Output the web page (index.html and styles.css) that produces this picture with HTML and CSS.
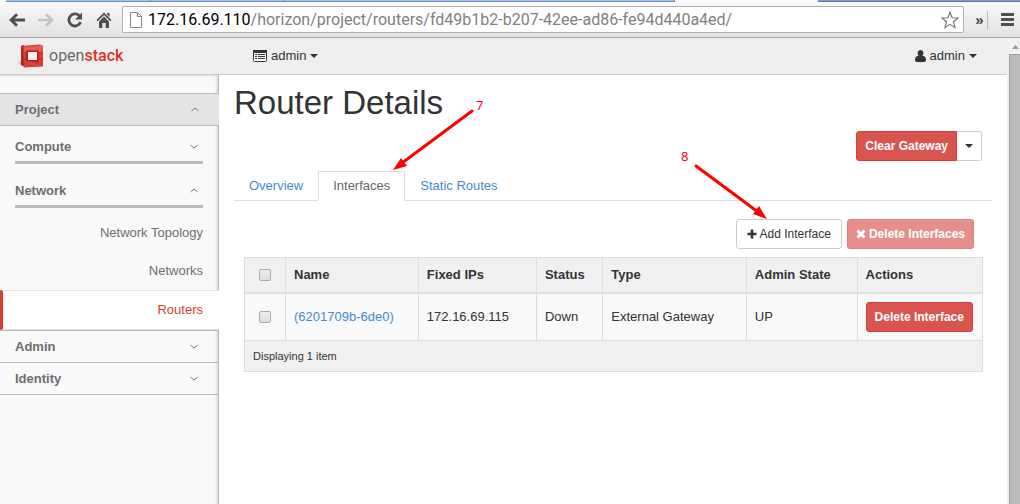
FILE: index.html
```html
<!DOCTYPE html>
<html lang="en">
<head>
<meta charset="utf-8">
<title>Router Details - OpenStack Dashboard</title>
<link rel="stylesheet" href="styles.css">
</head>
<body>
<div class="browser">
  <div class="tabstrip"><span class="tab-bg"></span><span class="tab-bg"></span><span class="tab-bg"></span><span class="tab-active"></span><span class="tab-rest"></span></div>
  <div class="toolbar">
    <div class="nav-buttons">
      <button class="icon-btn" aria-label="Back"><svg width="16" height="14" viewBox="0 0 16 14"><path d="M8 1.200L2 7l6 5.800M2.500 7H16" fill="none" stroke="#505050" stroke-width="2.800"/></svg></button>
      <button class="icon-btn" aria-label="Forward"><svg width="16" height="14" viewBox="0 0 16 14"><path d="M8 1.200L14 7l-6 5.800M13.500 7H0" fill="none" stroke="#c4c4c4" stroke-width="2.600"/></svg></button>
      <button class="icon-btn" aria-label="Reload"><svg width="16" height="16" viewBox="0 0 16 16"><path d="M12.300 3.800A6 6 0 1 0 13.600 10" fill="none" stroke="#505050" stroke-width="2.800"/><path d="M15 .5v7H8z" fill="#505050"/></svg></button>
      <button class="icon-btn" aria-label="Home"><svg width="16" height="16" viewBox="0 0 16 16"><path d="M8 .5L15.500 8l-1.200 1.200L8 3 1.700 9.200.5 8zM11 1h2.500v4L11 2.500zM8 4.500l5 5V16H9.700v-5H6.300v5H3V9.500z" fill="#505050"/></svg></button>
    </div>
    <div class="address">
      <svg width="12" height="16" viewBox="0 0 12 16"><path d="M.5.5h7l4 4v11H.5zM7.500.5v4h4" fill="#fff" stroke="#858585"/></svg>
      <div class="url"><span class="host">172.16.69.110</span>/horizon/project/routers/fd49b1b2-b207-42ee-ad86-fe94d440a4ed/</div>
      <button class="icon-btn" aria-label="Bookmark"><svg width="18" height="18" viewBox="0 0 18 18"><path d="M9 1.200l2.100 5.500 6 .3-4.700 3.700 1.600 5.900L9 13.300l-5 3.300 1.600-5.900L.9 7l6-.3z" fill="#fff" stroke="#707070" stroke-width="1.100"/></svg></button>
    </div>
    <button class="icon-btn more" aria-label="More bookmarks">»</button>
    <span class="divider"></span>
    <button class="icon-btn menu" aria-label="Menu"><svg width="13" height="13" viewBox="0 0 13 13"><path d="M0 1.500h13M0 6.500h13M0 11.500h13" stroke="#505050" stroke-width="3"/></svg></button>
  </div>
</div>

<div class="viewport">
  <div class="page">
    <header class="topbar">
      <a class="brand" href="#">
        <svg width="26" height="24" viewBox="0 0 26 24"><path d="M0 19l4-3v6z" fill="#c4c4c4"/><path d="M3 2l3-1.300L7 23l-4-2z" fill="#a92720"/><path d="M3 2L22 .5l3 1L6 3z" fill="#d2413a"/><path d="M5 2.500L25 1.500v21L6 23.500z" fill="#dc3d32"/><path d="M6 3l19-1.500v6L6 8z" fill="#e85b50"/><path d="M8 6.500h12.500V18L8 17z" fill="#a62620"/><path d="M10 8h9v8h-9z" fill="#f4eeee"/><path d="M3 9h5M3 15h5M21 9h4M21 15h4" stroke="#b52e27"/></svg>
        <span class="brand-name">open<b>stack</b></span>
      </a>
      <button class="top-menu project-menu"><svg width="14" height="12" viewBox="0 0 14 12"><path d="M1.500.5h11a1 1 0 0 1 1 1v9a1 1 0 0 1-1 1h-11a1 1 0 0 1-1-1v-9a1 1 0 0 1 1-1z" fill="#fff" stroke="#333"/><path d="M0 0h14v3H0z" fill="#333"/><path d="M2 4.500h2M5 4.500h7M2 6.500h2M5 6.500h7M2 8.500h2M5 8.500h7" stroke="#333"/></svg>admin<span class="caret"></span></button>
      <button class="top-menu"><svg width="11" height="12" viewBox="0 0 11 12"><path d="M5.500 0a3 3.300 0 0 1 2 5.700C10.300 6 11 8 11 10c0 1.300-.8 2-2 2H2c-1.200 0-2-.7-2-2 0-2 .7-4 3.500-4.300A3 3.300 0 0 1 5.500 0z" fill="#333"/></svg>admin<span class="caret"></span></button>
    </header>
    <div class="body">
      <nav class="sidebar">
        <a class="group open" href="#">Project<svg class="chev" viewBox="0 0 8 5"><path d="M.5 4L4 1l3.500 3"/></svg></a>
        <div class="panel">
          <a class="sub" href="#">Compute<svg class="chev" viewBox="0 0 8 5"><path d="M.5 1L4 4l3.500-3"/></svg></a>
          <a class="sub" href="#">Network<svg class="chev" viewBox="0 0 8 5"><path d="M.5 4L4 1l3.500 3"/></svg></a>
          <a class="item" href="#">Network Topology</a>
          <a class="item" href="#">Networks</a>
          <a class="item active" href="#">Routers</a>
        </div>
        <a class="group" href="#">Admin<svg class="chev" viewBox="0 0 8 5"><path d="M.5 1L4 4l3.500-3"/></svg></a>
        <a class="group" href="#">Identity<svg class="chev" viewBox="0 0 8 5"><path d="M.5 1L4 4l3.500-3"/></svg></a>
      </nav>
      <main class="content">
        <h1>Router Details</h1>
        <div class="page-actions"><button class="btn danger joined">Clear Gateway</button><button class="btn toggle" aria-label="More actions"><span class="caret"></span></button></div>
        <div class="tabs"><a href="#">Overview</a><a class="current" href="#">Interfaces</a><a href="#">Static Routes</a></div>
        <div class="pane">
          <div class="table-actions">
            <button class="btn"><svg width="10" height="10" viewBox="0 0 10 10"><path d="M5 .5v9M.5 5h9" stroke="#333" stroke-width="2.600"/></svg>Add Interface</button>
            <button class="btn danger" disabled><svg width="10" height="10" viewBox="0 0 10 10"><path d="M1.500 1.500l7 7M8.500 1.500l-7 7" stroke="#fff" stroke-width="3"/></svg>Delete Interfaces</button>
          </div>
          <table>
            <colgroup><col class="c-check"><col class="c-name"><col class="c-ip"><col class="c-status"><col class="c-type"><col class="c-state"><col class="c-actions"></colgroup>
            <thead><tr><th class="check"><input type="checkbox" aria-label="Select all"></th><th>Name</th><th>Fixed IPs</th><th>Status</th><th>Type</th><th>Admin State</th><th>Actions</th></tr></thead>
            <tbody><tr><td class="check"><input type="checkbox" aria-label="Select (6201709b-6de0)"></td><td><a href="#">(6201709b-6de0)</a></td><td>172.16.69.115</td><td>Down</td><td>External Gateway</td><td>UP</td><td><button class="btn danger">Delete Interface</button></td></tr></tbody>
            <tfoot><tr><td colspan="7">Displaying 1 item</td></tr></tfoot>
          </table>
        </div>
      </main>
    </div>
  </div>
  <div class="scrollbar"><svg width="7" height="4" viewBox="0 0 7 4"><path d="M3.500 0L7 4H0z" fill="#999"/></svg><span class="thumb"></span></div>
</div>

<svg class="notes" width="1020" height="504" viewBox="0 0 1020 504">
  <g stroke="#f00" stroke-width="3" stroke-linecap="round"><path d="M472 111L402 163M696 166L758 212"/></g>
  <g fill="#f00"><path d="M393 170l8-12 6 8zM767 219l-14-5 6-8z"/><text x="476" y="110">7</text><text x="681" y="161">8</text></g>
</svg>
</body>
</html>
```
FILE: styles.css
```css
* { box-sizing: border-box; }
html, body { height: 100%; }
body {
  margin: 0;
  display: flex;
  flex-direction: column;
  background: #fff;
  color: #333;
  font: 13px/18px "Liberation Sans", Arial, sans-serif;
}
a { color: #428bca; text-decoration: none; }
button { font: inherit; color: inherit; cursor: pointer; }
svg { flex: none; }

/* Browser chrome */
.browser { flex: none; border-bottom: 1px solid #a6a6a6; background: linear-gradient(#fafafa, #e2e2e2); }
.tabstrip { display: flex; height: 2px; padding-left: 6px; }
.tab-bg { flex: 144; background: #9cc5f5; border-bottom: 1px solid #6f8fb8; border-right: 1px solid #6f8fb8; }
.tab-bg:nth-child(2) { flex-grow: 134; }
.tab-bg:nth-child(3) { flex-grow: 390; }
.tab-active { flex: 143; }
.tab-rest { flex: 203; background: #7f9ccc; border-bottom: 1px solid #5f7aa6; }
.toolbar { display: flex; align-items: center; height: 35px; padding: 0 6px 0 9px; }
.nav-buttons { display: flex; gap: 13px; width: 113px; }
.icon-btn { display: flex; align-items: center; justify-content: center; padding: 0; border: 0; background: none; }
.address {
  flex: 1;
  display: flex;
  align-items: center;
  height: 27px;
  padding: 0 4px 0 7px;
  border: 1px solid #b0b0b0;
  border-radius: 2px;
  background: #fff;
}
.url { flex: 1; margin-left: 6px; color: #808080; font: 16px/24px Roboto, "Open Sans", sans-serif; white-space: nowrap; }
.host { color: #000; }
.more { width: 23px; padding-left: 8px; color: #444; font: bold 15px/20px "Liberation Sans", sans-serif; }
.divider { width: 1px; height: 18px; background: #bbb; }
.menu { width: 26px; padding-left: 13px; }

/* Page frame */
.viewport { flex: 1; display: flex; min-height: 0; }
.page { flex: 1; display: flex; flex-direction: column; min-width: 0; }
.scrollbar {
  flex: none;
  width: 13px;
  display: flex;
  flex-direction: column;
  align-items: center;
  padding: 7px 0 0 2px;
  background: #f1f1f1;
}
.scrollbar svg { margin-left: 2px; }
.thumb { flex: 1; align-self: stretch; margin-top: 5px; border: solid #a0a0a0; border-width: 1px 0 0 1px; background: #bbb; }

.topbar {
  display: flex;
  align-items: center;
  height: 37px;
  padding: 0 30px 0 18px;
  border-bottom: 1px solid #ccc;
  background: #eee;
}
.brand { display: flex; align-items: center; gap: 5px; width: 235px; }
.brand-name { color: #6b6b6b; font: 16px/24px Roboto, "Open Sans", sans-serif; }
.brand-name b { color: #d8322b; font-weight: 500; }
.top-menu { display: flex; align-items: center; gap: 4px; padding: 0; border: 0; background: none; }
.project-menu { margin-right: auto; }
.caret { border: 4px solid transparent; border-top-color: #333; border-bottom: 0; }

.body { flex: 1; display: flex; }
.sidebar {
  flex: none;
  width: 219px;
  padding-top: 18px;
  border-right: 1px solid #bbb;
  background: #f9f9f9;
  box-shadow: inset -3px 0 3px -2px #ccc, inset 0 3px 3px -2px #ddd;
}
.sidebar a { display: flex; align-items: center; justify-content: space-between; color: #6e6e6e; }
.group { height: 32px; padding: 0 20px 0 15px; border-bottom: 1px solid #bbb; font-weight: 700; }
.open { height: 33px; border-top: 1px solid #bbb; background: #e3e4e6; margin-right: -1px; }
.chev { width: 8px; height: 5px; fill: none; stroke: #777; }
.panel { padding: 6px 0 0; border-bottom: 1px solid #bbb; }
.sub { height: 32px; margin: 0 15px 12px; padding-right: 5px; border-bottom: 3px solid #bbb; font-weight: 700; }
.sidebar .item { height: 38px; padding: 0 15px; justify-content: flex-end; }
.sub + .item { margin-top: -6px; }
.sidebar .active { height: 40px; margin-right: -1px; padding-right: 16px; border: solid #e3e3e3; border-width: 1px 0; border-left: 3px solid #dd3c2b; background: #fff; color: #d93c2c; }

/* Content */
.content { flex: 1; padding: 9px 15px 0; }
h1 { margin: 0; font-weight: 400; font-size: 33px; line-height: 38px; }
.page-actions { display: flex; justify-content: flex-end; padding: 9px 10px 10px; }
.btn {
  display: inline-flex;
  align-items: center;
  gap: 3px;
  height: 30px;
  padding: 0 10px;
  border: 1px solid #ccc;
  border-radius: 3px;
  background: #fff;
  font-size: 12px;
  line-height: 18px;
  white-space: nowrap;
}
.danger { padding: 0 8px; border-color: #d43f3a; background: #d9534f; color: #fff; font-weight: 700; }
.danger:disabled { opacity: .65; }
.joined { border-radius: 3px 0 0 3px; }
.toggle { padding: 0 8px; border-left: 0; border-radius: 0 3px 3px 0; }
.tabs { display: flex; border-bottom: 1px solid #ddd; }
.tabs a { height: 30px; margin-bottom: -1px; padding: 5px 14px; border: 1px solid transparent; }
.tabs .current { border-color: #ddd #ddd #fff; background: #fff; color: #666; }
.pane { padding: 18px 9px 0 10px; }
.table-actions { display: flex; justify-content: flex-end; gap: 5px; padding: 0 9px 8px 0; }
table { width: 100%; table-layout: fixed; border-collapse: collapse; }
.c-check { width: 41px; }
.c-name { width: 18%; }
.c-ip { width: 16%; }
.c-status { width: 9%; }
.c-state { width: 15%; }
.c-actions { width: 17%; }
th, td { padding: 8px; border: 1px solid #ddd; text-align: left; white-space: nowrap; }
th { height: 35px; border-bottom-width: 2px; background: #f0f0f0; }
tbody td { height: 47px; background: #f9f9f9; }
tfoot td { height: 31px; padding: 6px 8px; background: #f0f0f0; font-size: 11px; }
td .btn { display: flex; }
.check { padding: 0; text-align: center; }
input[type="checkbox"] {
  appearance: none;
  display: block;
  width: 12px;
  height: 12px;
  margin: 0 auto;
  border: 1px solid #aaa;
  border-radius: 2px;
  background: linear-gradient(#eee, #dcdcdc);
}

/* Step callouts drawn over the page */
.notes { position: absolute; top: 0; left: 0; pointer-events: none; font: 13px "Noto Sans", sans-serif; }
```
